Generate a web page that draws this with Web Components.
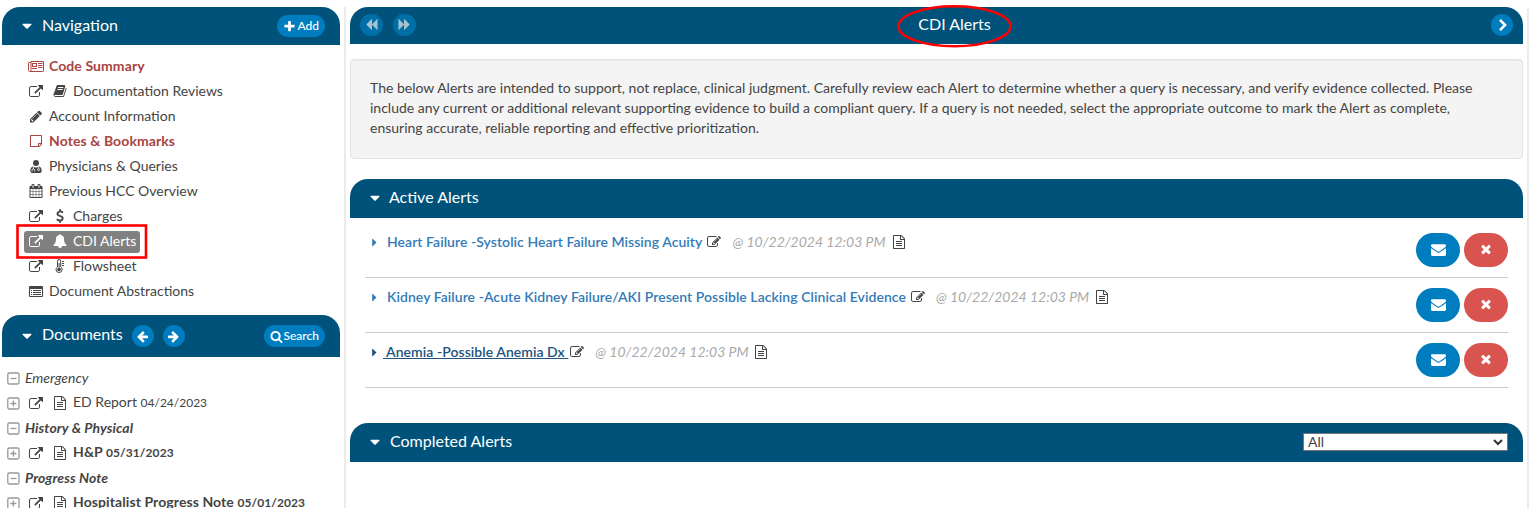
<!DOCTYPE html>
<html lang="en">
<head>
<meta charset="utf-8">
<title>CDI Alerts</title>
<style>
html,body{margin:0;height:100%;overflow:hidden;background:#fff}
body{font-family:Lato,"Liberation Sans",sans-serif;font-size:14px;line-height:20px;color:#444}
</style>
</head>
<body>
<app-shell></app-shell>
<script>
const P = {
external:'<path d="M1408 928v320q0 119-84.5 203.5t-203.5 84.5h-832q-119 0-203.5-84.5t-84.5-203.5v-832q0-119 84.5-203.5t203.5-84.5h704q14 0 23 9t9 23v64q0 14-9 23t-23 9h-704q-66 0-113 47t-47 113v832q0 66 47 113t113 47h832q66 0 113-47t47-113v-320q0-14 9-23t23-9h64q14 0 23 9t9 23zm384-864v512q0 26-19 45t-45 19-45-19l-176-176-652 652q-10 10-23 10t-23-10l-114-114q-10-10-10-23t10-23l652-652-176-176q-19-19-19-45t19-45 45-19h512q26 0 45 19t19 45z" transform="translate(0 128)"/>',
plus:'<path d="M1600 736v192q0 40-28 68t-68 28h-416v416q0 40-28 68t-68 28h-192q-40 0-68-28t-28-68v-416h-416q-40 0-68-28t-28-68v-192q0-40 28-68t68-28h416v-416q0-40 28-68t68-28h192q40 0 68 28t28 68v416h416q40 0 68 28t28 68z"/>',
envelope:'<path d="M1792 710v794q0 66-47 113t-113 47h-1472q-66 0-113-47t-47-113v-794q44 49 101 87 362 246 497 345 57 42 92.5 65.5t94.5 48 110 24.5h2q51 0 110-24.5t94.5-48 92.5-65.5q170-123 498-345 57-39 100-87zm0-294q0 79-49 151t-122 123q-376 261-468 325-10 7-42.5 31t-54 38.5-52 32.5-57.5 27-50 9h-2q-23 0-50-9t-57.5-27-52-32.5-54-38.5-42.5-31q-91-64-262-182.5t-205-142.5q-62-42-117-115.5t-55-136.5q0-78 41.5-130t118.5-52h1472q65 0 112.5 47t47.5 113z"/>',
times:'<path d="M1490 1322q0 40-28 68l-136 136q-28 28-68 28t-68-28l-294-294-294 294q-28 28-68 28t-68-28l-136-136q-28-28-28-68t28-68l294-294-294-294q-28-28-28-68t28-68l136-136q28-28 68-28t68 28l294 294 294-294q28-28 68-28t68 28l136 136q28 28 28 68t-28 68l-294 294 294 294q28 28 28 68z"/>',
search:'<path d="M1216 832q0-185-131.5-316.5t-316.5-131.5-316.5 131.5-131.5 316.5 131.5 316.5 316.5 131.5 316.5-131.5 131.5-316.5zm512 832q0 52-38 90t-90 38q-54 0-90-38l-343-342q-179 124-399 124-143 0-273.5-55.5t-225-150-150-225-55.5-273.5 55.5-273.5 150-225 225-150 273.5-55.5 273.5 55.5 225 150 150 225 55.5 273.5q0 220-124 399l343 343q37 37 37 90z"/>',
left:'<path d="M1664 896v128q0 53-32.5 90.5t-84.5 37.5h-704l293 294q38 36 38 90t-38 90l-75 76q-37 37-90 37-52 0-91-37l-651-652q-37-37-37-90 0-52 37-91l651-650q38-38 91-38 52 0 90 38l75 74q38 38 38 91t-38 91l-293 293h704q52 0 84.5 37.5t32.5 90.5z"/>',
chevron:'<path d="M1363 877l-742 742q-19 19-45 19t-45-19l-166-166q-19-19-19-45t19-45l531-531-531-531q-19-19-19-45t19-45l166-166q19-19 45-19t45 19l742 742q19 19 19 45t-19 45z" transform="translate(100 0)"/>',
backward:'<path d="M1683 141q19-19 32-13t13 32v1472q0 26-13 32t-32-13l-710-710q-9-9-13-19v710q0 26-13 32t-32-13l-710-710q-19-19-19-45t19-45l710-710q19-19 32-13t13 32v710q4-10 13-19z"/>',
pencil:'<path d="M491 1536l91-91-235-235-91 91v107h128v128h107zm523-928q0-22-22-22-10 0-17 7l-542 542q-7 7-7 17 0 22 22 22 10 0 17-7l542-542q7-7 7-17zm-54-192l416 416-832 832h-416v-416zm683 96q0 53-37 90l-166 166-416-416 166-165q36-38 90-38 53 0 91 38l235 234q37 39 37 91z" transform="translate(0 64)"/>',
edit:'<path d="M888 1184l116-116-152-152-116 116v56h96v96h56zm440-720q-16-16-33 1l-350 350q-17 17-1 33t33-1l350-350q17-17 1-33zm80 594v190q0 119-84.5 203.5t-203.5 84.5h-832q-119 0-203.5-84.5t-84.5-203.5v-832q0-119 84.5-203.5t203.5-84.5h832q63 0 117 25 15 7 18 23 3 17-9 29l-49 49q-14 14-32 8-23-6-45-6h-832q-66 0-113 47t-47 113v832q0 66 47 113t113 47h832q66 0 113-47t47-113v-126q0-13 9-22l64-64q15-15 35-7t20 29zm-96-738l288 288-672 672h-288v-288zm444 132l-92 92-288-288 92-92q28-28 68-28t68 28l152 152q28 28 28 68t-28 68z"/>',
file:'<path d="M1596 380q28 28 48 76t20 88v1152q0 40-28 68t-68 28h-1344q-40 0-68-28t-28-68v-1600q0-40 28-68t68-28h896q40 0 88 20t76 48zm-444-244v376h376q-10-29-22-41l-313-313q-12-12-41-22zm384 1528v-1024h-416q-40 0-68-28t-28-68v-416h-768v1536h1280zm-1024-864q0-14 9-23t23-9h704q14 0 23 9t9 23v64q0 14-9 23t-23 9h-704q-14 0-23-9t-9-23v-64zm736 224q14 0 23 9t9 23v64q0 14-9 23t-23 9h-704q-14 0-23-9t-9-23v-64q0-14 9-23t23-9h704zm0 256q14 0 23 9t9 23v64q0 14-9 23t-23 9h-704q-14 0-23-9t-9-23v-64q0-14 9-23t23-9h704z"/>',
book:'<path d="M1703 478q40 57 18 129l-275 906q-19 64-76.5 107.5t-122.5 43.5h-923q-77 0-148.5-53.5t-99.5-131.5q-24-67-2-127 0-4 3-27t4-37q1-8-3-21.5t-3-19.5q2-11 8-21t16.5-23.5 16.5-23.5q23-38 45-91.5t30-91.5q3-10 .5-30t-.5-28q3-11 17-28t17-23q21-36 42-92t25-90q1-9-2.5-32t.5-28q4-13 22-30.5t22-22.5q19-26 42.5-84.5t27.5-96.5q1-8-3-25.5t-2-26.5q2-8 9-18t18-23 17-21q8-12 16.5-30.5t15-35 16-36 19.5-32 26.5-23.5 36-11.5 47.5 5.5l-1 3q38-9 51-9h761q74 0 114 56t18 130l-274 906q-36 119-71.5 153.5t-128.5 34.5h-869q-27 0-38 15-11 16-1 43 24 70 144 70h923q29 0 56-15.5t35-41.5l300-987q7-22 5-57 38 15 59 43zm-1064 2q-4 13 2 22.5t20 9.5h608q13 0 25.5-9.5t16.5-22.5l21-64q4-13-2-22.5t-20-9.5h-608q-13 0-25.5 9.5t-16.5 22.5zm-83 256q-4 13 2 22.5t20 9.5h608q13 0 25.5-9.5t16.5-22.5l21-64q4-13-2-22.5t-20-9.5h-608q-13 0-25.5 9.5t-16.5 22.5z"/>',
note:'<path d="M1528 1280h-248v248q29-10 41-22l185-185q12-12 22-41zm-280-128h288v-896h-1280v1280h896v-288q0-40 28-68t68-28zm416-928v1024q0 40-20 88t-48 76l-184 184q-28 28-76 48t-88 20h-1024q-40 0-68-28t-28-68v-1344q0-40 28-68t68-28h1344q40 0 68 28t28 68z"/>',
calendar:'<path d="M192 1664h288v-288h-288v288zm352 0h320v-288h-320v288zm-352-352h288v-320h-288v320zm352 0h320v-320h-320v320zm-352-384h288v-288h-288v288zm736 736h320v-288h-320v288zm-384-736h320v-288h-320v288zm768 736h288v-288h-288v288zm-384-352h320v-320h-320v320zm-352-864v-288q0-13-9.5-22.5t-22.5-9.5h-64q-13 0-22.5 9.5t-9.5 22.5v288q0 13 9.5 22.5t22.5 9.5h64q13 0 22.5-9.5t9.5-22.5zm736 864h288v-320h-288v320zm-384-384h320v-288h-320v288zm384 0h288v-288h-288v288zm32-480v-288q0-13-9.5-22.5t-22.5-9.5h-64q-13 0-22.5 9.5t-9.5 22.5v288q0 13 9.5 22.5t22.5 9.5h64q13 0 22.5-9.5t9.5-22.5zm384-64v1280q0 52-38 90t-90 38h-1408q-52 0-90-38t-38-90v-1280q0-52 38-90t90-38h128v-96q0-66 47-113t113-47h64q66 0 113 47t47 113v96h384v-96q0-66 47-113t113-47h64q66 0 113 47t47 113v96h128q52 0 90 38t38 90z"/>',
bell:'<path d="M912 1696q0-16-16-16-59 0-101.5-42.5t-42.5-101.5q0-16-16-16t-16 16q0 73 51.5 124.5t124.5 51.5q16 0 16-16zm816-288q0 52-38 90t-90 38h-448q0 106-75 181t-181 75-181-75-75-181h-448q-52 0-90-38t-38-90q50-42 91-88t85-119.5 74.5-158.5 50-206 19.5-260q0-152 117-282.5t307-158.5q-8-19-8-39 0-40 28-68t68-28 68 28 28 68q0 20-8 39 190 28 307 158.5t117 282.5q0 139 19.5 260t50 206 74.5 158.5 85 119.5 91 88z"/>',
dollar:'<path d="M1362 1185q0 153-99.5 263.5t-258.5 136.5v175q0 14-9 23t-23 9h-135q-13 0-22.5-9.5t-9.5-22.5v-175q-66-9-127.5-31t-101.5-44.5-74-48-46.5-37.5-17.5-18q-17-21-2-41l103-135q7-10 23-12 15-2 24 9l2 2q113 99 243 125 37 8 74 8 81 0 142.5-43t61.5-122q0-28-15-53t-33.5-42-58.5-37.5-66-32-80-32.5q-39-16-61.5-25t-61.5-26.5-62.5-31-56.5-35.5-53.5-42.5-43.5-49-35.5-58-21-66.5-8.5-78q0-138 98-242t255-134v-180q0-13 9.5-22.5t22.5-9.5h135q14 0 23 9t9 23v176q57 6 110.5 23t87 33.5 63.5 37.5 39 29 15 14q17 18 5 38l-81 146q-8 15-23 16-14 3-27-7-3-3-14.5-12t-39-26.5-58.5-32-74.5-26-85.5-11.5q-95 0-155 43t-60 111q0 26 8.500 48t29.500 41.500 39.500 33 56 31 60.500 27 70 27.500q53 20 81 31.500t76 35 75.500 42.500 62 50 53 63.500 31.500 76.500 13 94z"/>',
down:'<path d="M1408 704q0 26-19 45l-448 448q-19 19-45 19t-45-19l-448-448q-19-19-19-45t19-45 45-19h896q26 0 45 19t19 45z"/>',
right:'<path d="M1152 896q0 26-19 45l-448 448q-19 19-45 19t-45-19-19-45v-896q0-26 19-45t45-19 45 19l448 448q19 19 19 45z"/>',
news:'<g transform="scale(128)"><path fill="none" stroke="currentColor" d="M2 3.500H.2q-.7 0-.7.7v7.300q0 1 1 1h13.300q.7 0 .7-.7V2.500H2v9.200q0 .8-.8.8"/><path fill-rule="evenodd" d="M3 4h5v4H3zM4 5v2h3V5zM3 9h5v1H3zM9 4h4.500v1H9zM9 6h4.500v1H9zM9 8h4.500v1H9z"/></g>',
doctor:'<g transform="scale(128)"><circle cx="7" cy="4" r="3"/><path d="M4 7.400q3 2 6 0 2.700.8 2.700 4.600 0 2-1.900 2H3.200q-1.900 0-1.900-2 0-3.800 2.700-4.600z"/><path fill="none" stroke="#fff" stroke-width=".8" d="M4.300 7.500v2.400M3 12.500v-1.300q0-1.200 1.300-1.200t1.300 1.200v1.300M9.600 7.700v1.800"/><circle cx="9.600" cy="10.600" r="1" fill="none" stroke="#fff" stroke-width=".8"/></g>',
thermo:'<g transform="scale(128)"><path fill="none" stroke="currentColor" d="M4.500 8V2.300q0-1.800 1.600-1.800t1.600 1.800V8q1.500.9 1.500 2.500 0 3-3.100 3T3 10.500Q3 8.900 4.500 8z"/><path d="M5.600 4h1v5q1.500.3 1.500 1.600t-2 1.700q-2-.2-2-1.700T5.600 9zM9 2h2v.9H9zM9 4h2v.9H9zM9 6h2v.9H9z"/></g>',
list:'<g transform="scale(128)"><path fill-rule="evenodd" d="M1 2h12q1 0 1 1v9q0 1-1 1H1q-1 0-1-1V3q0-1 1-1zm0 3v7h12V5z"/><path d="M2 6h1v1H2zM4 6h8v1H4zM2 8h1v1H2zM4 8h8v1H4zM2 10h1v1H2zM4 10h8v1H4z"/></g>',
collapse:'<g transform="scale(128)" fill="none" stroke="#999" stroke-width="1.300"><rect x="1.800" y="2" width="11.200" height="11" rx="1.500"/><path d="M4.500 7.500h6"/></g>',
expand:'<g transform="scale(128)" fill="none" stroke="#999" stroke-width="1.300"><rect x="1.800" y="2" width="11.200" height="11" rx="1.500"/><path d="M4.400 7.500h6M7.400 4.500v6"/></g>'
};
const flip = s => '<g transform="translate(1792) scale(-1 1)">' + s + '</g>';
P.arrowright = flip(P.left);
P.forward = flip(P.backward);

function define(name, render){
  customElements.define(name, class extends HTMLElement{
    connectedCallback(){
      if(this.shadowRoot) return;
      this.attachShadow({mode:'open'}).innerHTML = render(this);
    }
  });
}
const a = (el, n, d = '') => el.getAttribute(n) ?? d;
const icon = (n, s) => `<fa-icon name="${n}"${s ? ` size="${s}"` : ''}></fa-icon>`;

define('fa-icon', el => `<style>
:host{display:inline-flex;flex:none;align-items:center;justify-content:center}
svg{display:block;fill:currentColor;overflow:visible}
</style><svg width="${a(el,'size','14')}" height="${a(el,'size','14')}" viewBox="0 0 1792 1792">${P[a(el,'name')]}</svg>`);

define('pill-button', el => `<style>
:host{display:inline-flex;box-sizing:border-box;align-items:center;justify-content:center;gap:1px;height:22px;min-width:22px;border-radius:11px;background:#007dbf;color:#fff;font-size:12px;line-height:22px;font-weight:500;white-space:nowrap}
:host([wide]){padding:0 6px}
:host([dim]){opacity:.65;width:23px;padding-bottom:1px}
:host([large]){width:44px;height:34px;border-radius:17px;padding:0 0 2px}
:host([danger]){background:#d9534f;padding:0 1px 2px 0}
</style>${icon(a(el,'icon'), a(el,'size','13'))}<slot></slot>`);

define('panel-header', el => `<style>
:host{display:flex;box-sizing:border-box;flex:none;align-items:center;height:var(--h,38px);border-radius:18px 18px 0 0;background:#00527a;color:#fff;padding:0 15px 0 17px}
fa-icon{padding-bottom:1px}
.t{font-size:16px;line-height:20px;margin-left:var(--tx,7px);padding-bottom:var(--up,2px)}
.end{margin-left:auto;display:flex;align-items:center}
::slotted(pill-button){margin-left:9px}
</style>${icon('down','16')}<span class="t">${a(el,'label')}</span><slot></slot><span class="end"><slot name="end"></slot></span>`);

define('nav-item', el => `<style>
:host{display:flex;height:25px;align-items:center;padding-left:24px}
.r{display:flex;box-sizing:border-box;align-items:center;height:22px;padding:0 4px 2px 3px;border-radius:3px}
fa-icon{width:18px;margin-right:6px}
fa-icon:last-of-type{margin-right:4px}
:host([alert]){color:#a94442;font-weight:700;letter-spacing:.09px}
:host([active]) .r{background:#808080;color:#fff}
</style><div class="r">${a(el,'icons').split(' ').map(n=>icon(n)).join('')}<span><slot></slot></span></div>`);

define('doc-group', () => `<style>
:host{display:flex;height:25px;align-items:center;font-style:italic;padding-left:6px}
:host([strong]){font-weight:700;letter-spacing:.09px}
fa-icon{margin-right:5px}
</style>${icon('collapse')}<slot></slot>`);

define('doc-row', el => `<style>
:host{display:flex;height:25px;align-items:center;padding-left:6px;white-space:pre}
:host([strong]){font-weight:700;letter-spacing:.09px}
.x{width:18px;margin-left:7px}.f{width:18px;margin:0 4px 0 6px}
.d{font-size:12px}
</style>${icon('expand')}<fa-icon class="x" name="external"></fa-icon><fa-icon class="f" name="file"></fa-icon><span><slot></slot> <span class="d">${a(el,'date')}</span></span>`);

define('alert-row', el => `<style>
:host{display:flex;box-sizing:border-box;height:55px;border-bottom:1px solid #ccc;padding-top:10px;align-items:flex-start}
.l{display:flex;align-items:center;height:20px;margin:-1px 0 0 6px}
.c{width:6px;color:#337ab7;margin-right:7px}
.n{color:#337ab7;font-weight:600;white-space:pre;padding-left:3px;letter-spacing:.05px}
:host([hover]) .n{color:#23527c;text-decoration:underline;padding-left:0;margin-left:-1px}
:host([hover]) .c{color:#23527c}
.e{margin:0 11px 0 5px}:host([hover]) .e{margin-left:2px}
.w{color:#aaa;font-style:italic;margin-right:6px}
.b{margin-left:auto;display:flex;gap:4px}
</style><div class="l"><fa-icon class="c" name="right" size="13"></fa-icon><span class="n">${el.hasAttribute('hover')?' ':''}<slot></slot>${el.hasAttribute('hover')?' ':''}</span><fa-icon class="e" name="edit"></fa-icon><span class="w">@ 10/22/2024 12:03 PM</span>${icon('file')}</div>
<div class="b"><pill-button large icon="envelope" size="15"></pill-button><pill-button large danger icon="times" size="14"></pill-button></div>`);

define('info-note', () => `<style>
:host{display:block;box-sizing:border-box;height:100px;border:1px solid #e3e3e3;border-radius:4px;background:#f4f4f4;box-shadow:inset 0 1px 1px rgba(0,0,0,.05);padding:18px 19px;white-space:nowrap}
</style><slot></slot>`);

define('filter-select', el => `<style>
:host{display:flex;box-sizing:border-box;width:205px;height:18px;border:1px solid #767676;background:#fff;color:#444;align-items:center;justify-content:space-between;padding:0 4px;margin-bottom:1px}
span{padding-bottom:1px}
svg{display:block}
</style><span><slot></slot></span><svg width="10" height="7" viewBox="0 0 10 7"><path d="M1 1l4 4 4-4" fill="none" stroke="#333" stroke-width="2"/></svg>`);

define('side-bar', () => `<style>
:host{display:flex;flex-direction:column;width:338px;flex:none;margin:7px 4px 0 2px}
.nav{padding:9px 0 11px;margin-left:-2px}
.docs{padding-top:8px;margin-left:-2px}
.docs>*{white-space:nowrap}
</style>
<panel-header label="Navigation"><pill-button slot="end" wide icon="plus">Add</pill-button></panel-header>
<div class="nav">
<nav-item alert icons="news">Code Summary</nav-item>
<nav-item icons="external book">Documentation Reviews</nav-item>
<nav-item icons="pencil">Account Information</nav-item>
<nav-item alert icons="note">Notes &amp; Bookmarks</nav-item>
<nav-item icons="doctor">Physicians &amp; Queries</nav-item>
<nav-item icons="calendar">Previous HCC Overview</nav-item>
<nav-item icons="external dollar">Charges</nav-item>
<nav-item active icons="external bell">CDI Alerts</nav-item>
<nav-item icons="external thermo">Flowsheet</nav-item>
<nav-item icons="list">Document Abstractions</nav-item>
</div>
<panel-header label="Documents" style="--h:42px;--up:4px"><pill-button icon="left"></pill-button><pill-button icon="arrowright"></pill-button><pill-button slot="end" wide icon="search">Search</pill-button></panel-header>
<div class="docs">
<doc-group>Emergency</doc-group>
<doc-row date="04/24/2023">ED Report</doc-row>
<doc-group strong>History &amp; Physical</doc-group>
<doc-row strong date="05/31/2023">H&amp;P</doc-row>
<doc-group strong>Progress Note</doc-group>
<doc-row strong date="05/01/2023">Hospitalist Progress Note</doc-row>
</div>`);

define('page-title', () => `<style>
:host{display:grid;grid-template-columns:1fr auto 1fr;align-items:center;box-sizing:border-box;height:37px;border-radius:18px 18px 0 0;background:#00527a;color:#fff;padding:0 10px 1px}
.l{display:flex;gap:10px}.r{justify-self:end}
.t{font-size:16px;line-height:20px;margin-top:-3px;transform:translateX(18px)}
</style><div class="l"><pill-button dim icon="backward"></pill-button><pill-button dim icon="forward"></pill-button></div><span class="t"><slot></slot></span><pill-button class="r" icon="chevron"></pill-button>`);

define('main-panel', () => `<style>
:host{display:block;box-sizing:border-box;flex:1;margin-top:7px;padding:0 4px;border-left:2px solid #ebebeb;border-right:2px solid #ebebeb}
info-note{margin:15px 0 20px}
.list{padding:5px 15px 35px}
</style>
<page-title>CDI Alerts</page-title>
<info-note>The below Alerts are intended to support, not replace, clinical judgment. Carefully review each Alert to determine whether a query is necessary, and verify evidence collected. Please<br>include any current or additional relevant supporting evidence to build a compliant query. If a query is not needed, select the appropriate outcome to mark the Alert as complete,<br>ensuring accurate, reliable reporting and effective prioritization.</info-note>
<panel-header label="Active Alerts" style="--h:39px;--up:3px;--tx:6px"></panel-header>
<div class="list">
<alert-row>Heart Failure -Systolic Heart Failure Missing Acuity</alert-row>
<alert-row>Kidney Failure -Acute Kidney Failure/AKI Present Possible Lacking Clinical Evidence</alert-row>
<alert-row hover>Anemia -Possible Anemia Dx</alert-row>
</div>
<panel-header label="Completed Alerts" style="--h:39px;--up:3px"><filter-select slot="end">All</filter-select></panel-header>`);

define('mark-up', () => `<style>
:host{position:absolute;inset:0;pointer-events:none}
svg{display:block}
</style><svg width="1529" height="508" fill="none" stroke="#f00"><rect x="17.500" y="225.500" width="128.500" height="32" stroke-width="2.600"/><ellipse cx="954.500" cy="26.300" rx="56" ry="20" stroke-width="2.500"/></svg>`);

define('app-shell', () => `<style>
:host{display:flex;position:relative;width:1529px;height:508px;overflow:hidden}
</style><side-bar></side-bar><main-panel></main-panel><mark-up></mark-up>`);
</script>
</body>
</html>
